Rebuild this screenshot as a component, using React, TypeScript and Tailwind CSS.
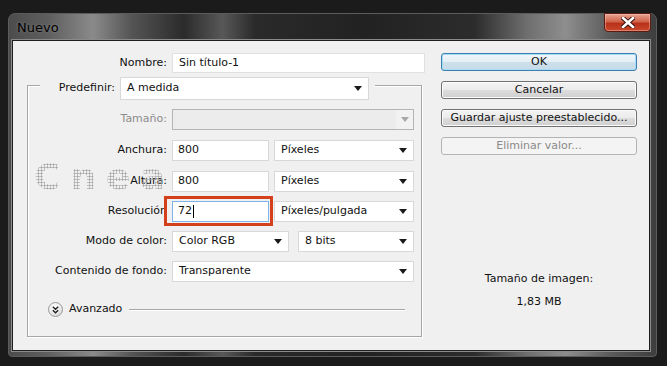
import { ReactNode } from "react";

const font = { fontFamily: '"DejaVu Sans", "Liberation Sans", sans-serif' };

function Arrow({ disabled }: { disabled?: boolean }) {
    return (
        <svg width="8" height="5" viewBox="0 0 8 5" className="shrink-0">
            <path d="M0 0 H8 L4 5 Z" fill={disabled ? "#a8a8a8" : "#1a1a1a"} />
        </svg>
    );
}

function Select({ value, className = "", h = "h-[21px]" }: { value: string; className?: string; h?: string }) {
    return (
        <div
            className={`${h} ${className} bg-white border border-[#d8d8d8] flex items-center justify-between pl-[6px] pr-[6px] text-[#111]`}
        >
            <span>{value}</span>
            <Arrow />
        </div>
    );
}

function Field({ value }: { value: string }) {
    return (
        <div className="h-[21px] w-[97px] bg-white border border-[#d8d8d8] flex items-center pl-[5px] text-[#111]">
            {value}
        </div>
    );
}

function Row({ label, children, disabled, gap = "mt-[9px]" }: { label: string; children: ReactNode; disabled?: boolean; gap?: string }) {
    return (
        <div className={`flex items-center ${gap}`}>
            <div className={`w-[144px] text-right pr-[5px] ${disabled ? "text-[#8c8c8c]" : "text-[#111]"}`}>{label}</div>
            <div className="flex items-center gap-[5px]">{children}</div>
        </div>
    );
}

function Button({ label, kind }: { label: string; kind?: "default" | "disabled" }) {
    const base =
        kind === "default"
            ? "border-[#3c7fb1] shadow-[inset_0_0_0_1px_#a8dcf5] bg-[linear-gradient(#f2f7fa,#e3eef5_50%,#cde0ec_51%,#c6dbe8)] text-[#111]"
            : kind === "disabled"
              ? "border-[#b4b4b4] bg-[#f4f4f4] text-[#8a8a8a]"
              : "border-[#707070] bg-[linear-gradient(#f3f3f3,#ebebeb_50%,#dddddd_51%,#cfcfcf)] text-[#111] shadow-[inset_0_0_0_1px_#fcfcfc]";
    return (
        <div className={`h-[18px] w-[196px] rounded-[3px] border flex items-center justify-center ${base}`}>{label}</div>
    );
}

export default function App() {
    return (
        <div className="w-[667px] h-[366px] bg-[#1b1b1b] pt-[13px] pl-[8px] text-[11px]" style={font}>
            <div className="relative w-[649px] h-[344px] rounded-t-[7px] rounded-b-[4px] border border-[#5c5c5c] bg-[linear-gradient(90deg,#4c4c4c_0%,#5e5e5e_6%,#8a8a8a_13%,#545454_19%,#2b2b2b_27%,#585858_33%,#2a2a2a_38%,#222_55%,#2c2c2c_72%,#6e6e6e_80%,#8e8e8e_86%,#5a5a5a_93%,#3e3e3e_100%)] flex flex-col px-[3px]">
                <div className="h-[26px] flex items-center pl-[5px] pt-[1px] text-[13px] text-black [text-shadow:0_0_3px_rgba(255,255,255,0.25)]">
                    Nuevo
                </div>
                <div className="absolute top-[-1px] right-[5px] w-[47px] h-[19px] rounded-b-[4px] border border-[#5a1c12] bg-[linear-gradient(#e8a493,#d0644a_45%,#b8321a_55%,#c8482a)] flex items-center justify-center shadow-[inset_0_0_0_1px_rgba(255,200,190,0.45)]">
                    <svg width="14" height="11" viewBox="0 0 14 11">
                        <path d="M2 1 L12 10 M12 1 L2 10" stroke="#3a1010" strokeWidth="4.5" strokeLinecap="square" />
                        <path d="M2 1 L12 10 M12 1 L2 10" stroke="#ffffff" strokeWidth="2.6" strokeLinecap="square" />
                    </svg>
                </div>
                <div className="flex-1 mb-[5px] mr-[3px] border border-[#1f1f1f] bg-[#f0f0f0] flex shadow-[0_0_0_1px_#8a8a8a]">
                    {/* left side */}
                    <div className="w-[413px] pt-[12px]">
                        <div className="flex items-center">
                            <div className="w-[159px] text-right pr-[5px] text-[#111]">Nombre:</div>
                            <div className="h-[20px] w-[253px] bg-white border border-[#e0e0e0] flex items-center pl-[6px] text-[#111]">
                                Sin título-1
                            </div>
                        </div>
                        <div className="relative mt-[12px] ml-[14px] w-[395px] h-[252px] border border-[#a6a6a6] shadow-[1px_1px_0_#ffffff,inset_1px_1px_0_#ffffff]">
                            <div className="-mt-[9px] ml-[12px] w-[335px] bg-[#f0f0f0] flex items-center pr-[6px]">
                                <div className="w-[80px] text-right pr-[5px] text-[#111]">Predefinir:</div>
                                <Select value="A medida" className="w-[249px]" h="h-[23px]" />
                            </div>
                            <Row label="Tamaño:" disabled>
                                <div className="h-[21px] w-[242px] bg-[#ececec] border border-[#b4b4b4] flex items-center justify-end">
                                    <div className="h-full w-[17px] bg-[#f2f2f2] flex items-center justify-center">
                                        <Arrow disabled />
                                    </div>
                                </div>
                            </Row>
                            <Row label="Anchura:" gap="mt-[10px]">
                                <Field value="800" />
                                <Select value="Píxeles" className="w-[140px]" />
                            </Row>
                            <Row label="Altura:" gap="mt-[10px]">
                                <Field value="800" />
                                <Select value="Píxeles" className="w-[140px]" />
                            </Row>
                            <Row label="Resolución" gap="mt-[9px]">
                                <div className="relative">
                                    <div className="h-[21px] w-[97px] bg-white border border-[#7eb4ea] flex items-center pl-[5px] text-[#111]">
                                        72<span className="ml-[1px] w-px h-[13px] bg-black" />
                                    </div>
                                    <div className="absolute -left-[8px] -right-[4px] -top-[5px] -bottom-[4px] border-[3px] border-[#d4401c]" />
                                </div>
                                <Select value="Píxeles/pulgada" className="w-[140px]" />
                            </Row>
                            <Row label="Modo de color:" gap="mt-[9px]">
                                <Select value="Color RGB" className="w-[117px]" />
                                <Select value="8 bits" className="w-[116px] ml-[4px]" />
                            </Row>
                            <Row label="Contenido de fondo:" gap="mt-[9px]">
                                <Select value="Transparente" className="w-[242px]" />
                            </Row>
                            <div className="mt-[19px] pl-[20px] pr-[16px] flex items-center h-[17px]">
                                <div className="w-[15px] h-[15px] rounded-full border border-[#9a9a9a] bg-[radial-gradient(circle_at_40%_30%,#ffffff,#e6e6e6_60%,#c8c8c8)] flex items-center justify-center">
                                    <svg width="7" height="8" viewBox="0 0 7 8">
                                        <path d="M0.8 0.8 L3.5 3.3 L6.2 0.8 M0.8 4.3 L3.5 6.8 L6.2 4.3" stroke="#222" strokeWidth="1.4" fill="none" />
                                    </svg>
                                </div>
                                <span className="ml-[6px] text-[#111]">Avanzado</span>
                                <div className="flex-1 ml-[7px] h-px bg-[#a6a6a6] border-b border-white box-content" />
                            </div>
                            <div className="absolute left-[6px] top-[77px] text-[36px] font-bold leading-[28px] tracking-[10px] text-transparent bg-[radial-gradient(circle,#a4a4a4_0.9px,transparent_1.2px)] bg-[length:3px_3px] bg-clip-text pointer-events-none">
                                Cnea
                            </div>
                        </div>
                    </div>
                    {/* right side */}
                    <div className="ml-[15px] pt-[12px] w-[196px] flex flex-col">
                        <div className="flex flex-col gap-[10px]">
                            <Button label="OK" kind="default" />
                            <Button label="Cancelar" />
                            <Button label="Guardar ajuste preestablecido..." />
                            <Button label="Eliminar valor..." kind="disabled" />
                        </div>
                        <div className="mt-[117px] text-center text-[#111] leading-[13px]">Tamaño de imagen:</div>
                        <div className="mt-[10px] text-center text-[#111] leading-[13px]">1,83 MB</div>
                    </div>
                </div>
            </div>
        </div>
    );
}
